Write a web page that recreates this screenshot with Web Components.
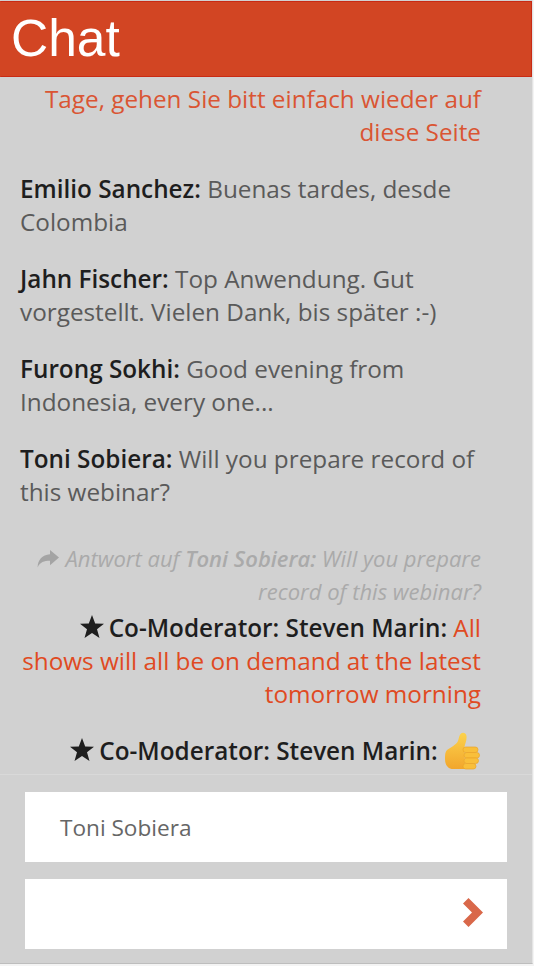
<!DOCTYPE html>
<html lang="de">
<head>
<meta charset="utf-8">
<title>Chat</title>
<style>
html,body{margin:0;padding:0;background:#f4f4f4}
body{font-family:"Open Sans",sans-serif;height:966px;overflow:hidden}
</style>
</head>
<body>
<chat-app>
<chat-header slot="header">Chat</chat-header>
<chat-message variant="mod" style="color:#da5533">Tage, gehen Sie bitt einfach wieder auf diese Seite</chat-message>
<chat-message author="Emilio Sanchez">Buenas tardes, desde Colombia</chat-message>
<chat-message author="Jahn Fischer">Top Anwendung. Gut vorgestellt. Vielen Dank, bis später :-)</chat-message>
<chat-message author="Furong Sokhi">Good evening from Indonesia, every one...</chat-message>
<chat-message author="Toni Sobiera">Will you prepare record of this webinar?</chat-message>
<chat-reply author="Toni Sobiera" text="Will you prepare record of this webinar?"></chat-reply>
<chat-message variant="mod" star author="Co-Moderator: Steven Marin">All shows will all be on demand at the latest tomorrow morning</chat-message>
<chat-message variant="mod" star author="Co-Moderator: Steven Marin"><thumb-icon></thumb-icon></chat-message>
<chat-form slot="form" name="Toni Sobiera"></chat-form>
</chat-app>

<script>
class ChatApp extends HTMLElement{
constructor(){
super();
const shadow = this.attachShadow({mode:'open'});
shadow.innerHTML = `
<style>
:host{display:flex;flex-direction:column;width:532px;height:963px;background:#d1d1d1;border-right:1px solid #e4e4e4;border-bottom:1px solid #bdbdbd;overflow:hidden}
.list{flex:1;min-height:0;overflow:hidden;padding:5px 51px 0 20px;display:flex;flex-direction:column;justify-content:flex-start}
</style>
<slot name="header"></slot>
<div class="list"><slot></slot></div>
<slot name="form"></slot>
`;
}
}

class ChatHeader extends HTMLElement{
constructor(){
super();
const shadow = this.attachShadow({mode:'open'});
shadow.innerHTML = `
<style>
:host{display:flex;align-items:center;flex:none;height:74px;margin-top:1px;padding-left:10px;background:#d24523;border:1px solid #c92a14;border-left-color:#d24523;color:#fff;font:51.500px/1 "Liberation Sans",Arial,sans-serif}
</style>
<slot></slot>
`;
}
}

class ChatMessage extends HTMLElement{
constructor(){
super();
const shadow = this.attachShadow({mode:'open'});
const author = this.getAttribute('author');
const star = this.hasAttribute('star') ? `<svg class="star" viewBox="0 0 24 23" width="24" height="23"><path d="M12 0l3.200 8.400 8.800.3-7 5.500 2.500 8.800L12 17.900 4.500 23 7 14.200 0 8.700l8.800-.3z"/></svg>` : '';
shadow.innerHTML = `
<style>
:host{display:block;margin-bottom:24px;font-size:24.3px;line-height:33px;color:#5a5a5a}
:host([variant=mod]){text-align:right;color:#e04a22}
b{font-weight:600;color:#1e1e1e}
.star{fill:#1e1e1e;vertical-align:-1px;margin-right:5px}
</style>
${author ? `${star}<b>${author}:</b> ` : ''}<slot></slot>
`;
}
}

class ChatReply extends HTMLElement{
constructor(){
super();
const shadow = this.attachShadow({mode:'open'});
shadow.innerHTML = `
<style>
:host{display:block;margin-top:10px;margin-bottom:3px;text-align:right;font-size:22px;line-height:33px;font-style:italic;color:#aaa}
b{font-weight:600}
svg{fill:#a4a4a4;vertical-align:-1px;margin-right:6px}
</style>
<svg viewBox="0 0 22 18" width="22" height="18"><path d="M13 0l9 7.600-9 7.600v-4.400C7 10.800 3.200 12 .6 17.400 .8 10 5 4.600 13 4.200z"/></svg>Antwort auf <b>${this.getAttribute('author')}:</b> ${this.getAttribute('text')}
`;
}
}

class ThumbIcon extends HTMLElement{
constructor(){
super();
const shadow = this.attachShadow({mode:'open'});
shadow.innerHTML = `
<style>
:host{display:inline-block;width:36px;height:38px;vertical-align:-4px;margin:-8px 0 -6px 1px}
svg{display:block}
</style>
<svg viewBox="0 0 36 38" width="36" height="38">
<defs><linearGradient id="g" x1="0" y1="0" x2="0" y2="1"><stop offset="0" stop-color="#fcd24c"/><stop offset="1" stop-color="#f2a62c"/></linearGradient></defs>
<path fill="url(#g)" d="M2 18C6 15 11 13 13 9 14 6 14 3 16 1.500 18 0 21 1 21.500 4 22 8 20 12 19.500 15L20 37H8C3 37 0 33 0 27 0 23 0 20 2 18z"/>
<g fill="#f9bf3a" stroke="#eba52a" stroke-width=".7">
<rect x="18" y="15" width="15" height="5.500" rx="2.700"/>
<rect x="19" y="20.500" width="15.500" height="5.500" rx="2.700"/>
<rect x="19" y="26" width="14.500" height="5.500" rx="2.700"/>
<rect x="18" y="31.500" width="13" height="5.500" rx="2.700"/>
</g>
</svg>
`;
}
}

class ChatForm extends HTMLElement{
constructor(){
super();
const shadow = this.attachShadow({mode:'open'});
shadow.innerHTML = `
<style>
:host{display:flex;flex-direction:column;flex:none;gap:17px;padding:17px 25px 14px 25px;border-top:1px solid #d9d9d9;background:#d1d1d1}
.field{display:flex;align-items:center;justify-content:space-between;height:70px;padding:0 24px 0 35px;background:#fff;font-size:22.600px;color:#666;box-sizing:border-box}
svg{fill:#d9684a;display:block;margin-bottom:4px}
</style>
<div class="field">${this.getAttribute('name')}</div>
<div class="field"><span></span><svg viewBox="0 0 20 29" width="20" height="29"><path d="M5.500 0L20 14.500 5.500 29 0 23.500l9-9-9-9z"/></svg></div>
`;
}
}

customElements.define('chat-app', ChatApp);
customElements.define('chat-header', ChatHeader);
customElements.define('chat-message', ChatMessage);
customElements.define('chat-reply', ChatReply);
customElements.define('thumb-icon', ThumbIcon);
customElements.define('chat-form', ChatForm);
</script>
</body>
</html>
